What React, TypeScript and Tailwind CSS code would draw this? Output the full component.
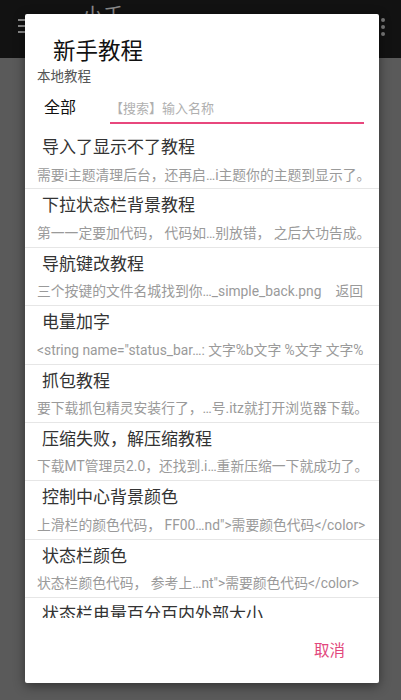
import React, { FC } from 'react';

// tutorial entries shown in the dialog list
interface Tutorial {
  title: string;
  summary?: string;
}

const tutorials: Tutorial[] = [
  { title: '导入了显示不了教程', summary: '需要i主题清理后台，还再启…i主题你的主题到显示了。' },
  { title: '下拉状态栏背景教程', summary: '第一一定要加代码， 代码如…别放错， 之后大功告成。' },
  { title: '导航键改教程', summary: '三个按键的文件名城找到你…_simple_back.png\u2003返回' },
  { title: '电量加字', summary: '<string name="status_bar…: 文字%b文字 %文字 文字%' },
  { title: '抓包教程', summary: '要下载抓包精灵安装行了，…号.itz就打开浏览器下载。' },
  { title: '压缩失败，解压缩教程', summary: '下载MT管理员2.0，还找到.i…重新压缩一下就成功了。' },
  { title: '控制中心背景颜色', summary: '上滑栏的颜色代码，  FF00…nd">需要颜色代码</color>' },
  { title: '状态栏颜色', summary: '状态栏颜色代码， 参考上…nt">需要颜色代码</color>' },
  { title: '状态栏电量百分百内外部大小', summary: '' },
];

const TutorialRow: FC<{ item: Tutorial }> = ({ item }) => (
  <div className="h-[58.4px] shrink-0 border-b-[1.5px] border-[#e6e6e6] pt-[4px] flex flex-col">
    <div className="pl-[17px] text-[17px] leading-[25px] text-[#333] whitespace-nowrap">{item.title}</div>
    <div className="mt-[4.5px] pl-[12px] pr-[4px] text-[13.8px] leading-[20px] text-[#9a9a9a] whitespace-nowrap overflow-hidden">
      {item.summary}
    </div>
  </div>
);

const App: FC = () => {
  return (
    <div className="relative w-[401px] h-[700px] overflow-hidden bg-[#5a5a5a] font-[Roboto,'Noto_Sans_CJK_SC',sans-serif]">
      {/* app bar behind the dim overlay */}
      <div className="h-[58px] bg-[#121212] flex items-start">
        <svg className="mt-[18px] ml-[16px]" width="20" height="16" viewBox="0 0 20 16">
          <rect x="2" y="1" width="16" height="2" fill="#8a8a8a" />
          <rect x="2" y="7" width="16" height="2" fill="#8a8a8a" />
          <rect x="2" y="13" width="16" height="2" fill="#8a8a8a" />
        </svg>
        <div className="ml-[46px] mt-[2px] text-[21px] leading-[28px] text-[#8a8a8a]">小千</div>
        <div className="ml-auto mr-[16px] mt-[18px] flex flex-col gap-[3px]">
          <span className="w-[4px] h-[4px] rounded-full bg-[#7a7a7a]" />
          <span className="w-[4px] h-[4px] rounded-full bg-[#7a7a7a]" />
          <span className="w-[4px] h-[4px] rounded-full bg-[#7a7a7a]" />
        </div>
      </div>

      {/* dialog */}
      <div className="absolute left-[25px] top-[14px] w-[354px] h-[669px] bg-white rounded-[2px] shadow-[0_3px_12px_rgba(0,0,0,0.45)] flex flex-col">
        <div className="pt-[22px] pl-[28px] text-[22.5px] leading-[30px] text-[#111]">新手教程</div>
        <div className="pl-[12px] text-[13.5px] leading-[20px] text-[#555]">本地教程</div>

        <div className="mt-[10px] mb-[7px] flex items-start">
          <div className="w-[85px] pl-[19px] text-[16px] leading-[24px] text-[#111]">全部</div>
          <div className="w-[254px] h-[28px] border-b-2 border-[#e8477d] flex items-center">
            <span className="text-[13px] leading-[20px] text-[#b0b0b0] whitespace-nowrap">【搜索】输入名称</span>
          </div>
        </div>

        <div className="flex-1 overflow-hidden flex flex-col">
          {tutorials.map((t) => (
            <TutorialRow key={t.title} item={t} />
          ))}
        </div>

        <div className="h-[65px] shrink-0 flex items-center justify-end pr-[34px]">
          <button className="text-[15.5px] leading-[22px] text-[#e2477d]">取消</button>
        </div>
      </div>
    </div>
  );
};

export default App;
